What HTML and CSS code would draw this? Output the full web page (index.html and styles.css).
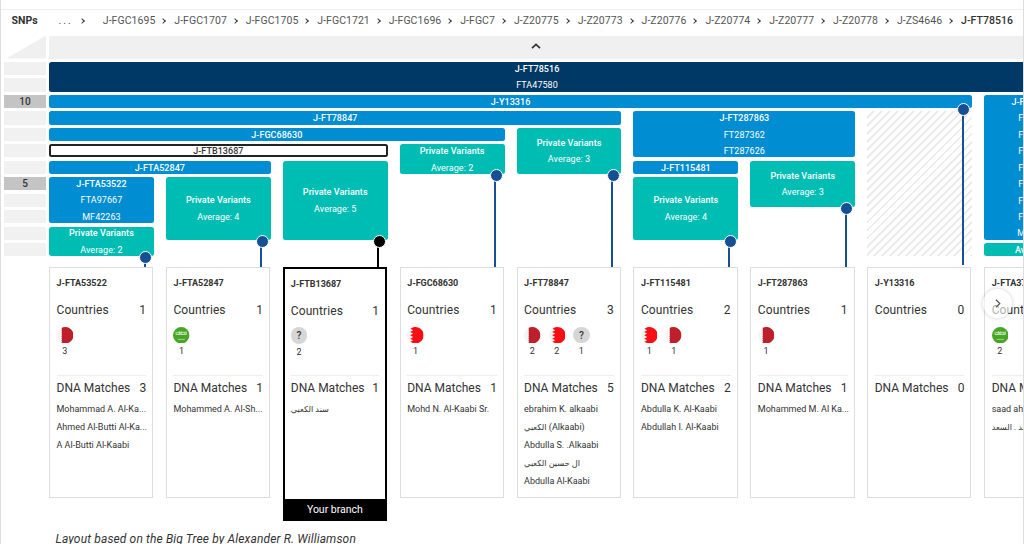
FILE: index.html
```html
<!DOCTYPE html>
<html lang="en">
<head>
  <meta charset="UTF-8" />
  <meta name="viewport" content="width=device-width, initial-scale=1" />
  <title>Block Tree</title>
  <link rel="stylesheet" href="styles.css">
</head>
<body>

  <!-- Flag symbols -->
  <svg class="symbols" width="0" height="0">
    <symbol id="qatar" viewBox="0 0 16 16">
      <circle cx="8" cy="8" r="8" fill="#f6f4f4" />
      <path d="M4.3 0.9A8 8 0 1 1 4.3 15.1L4.9 14l-.6-1 .6-1-.6-1 .6-1-.6-1 .6-1-.6-1 .6-1-.6-1 .6-1-.6-1 .6-1z" fill="#bf1f2a" />
    </symbol>
    <symbol id="bahrain" viewBox="0 0 16 16">
      <circle cx="8" cy="8" r="8" fill="#f3f3f3" />
      <path d="M6 .3A8 8 0 1 1 6 15.7L3.4 14.3 6 12.9 3.1 11.3 6 9.6 3.1 8 6 6.4 3.1 4.8 6 3.2 3.4 1.7z" fill="#fb0d14" />
    </symbol>
    <symbol id="saudi" viewBox="0 0 16 16">
      <circle cx="8" cy="8" r="8" fill="#48a526" />
      <path d="M3 7.4V4.5M4.2 7h2V4.6M6.2 4.2 7.4 7M8.5 7V4.3M9.6 7h2V4.6M12.9 7.4V4.4M3 7.2h10M4 5.2h8" fill="none" stroke="#c6e6ba" stroke-width=".9" />
      <path d="M4.6 12h7" stroke="#b4dea4" stroke-width=".8" />
    </symbol>
  </svg>

  <div class="page">
    <div class="crumbs">
      <span class="crumbs-title">SNPs</span>
      <span class="dots">...</span><i class="sep first"></i>
      <span>J-FGC1695</span><i class="sep"></i>
      <span>J-FGC1707</span><i class="sep"></i>
      <span>J-FGC1705</span><i class="sep"></i>
      <span>J-FGC1721</span><i class="sep"></i>
      <span>J-FGC1696</span><i class="sep"></i>
      <span>J-FGC7</span><i class="sep"></i>
      <span>J-Z20775</span><i class="sep"></i>
      <span>J-Z20773</span><i class="sep"></i>
      <span>J-Z20776</span><i class="sep"></i>
      <span>J-Z20774</span><i class="sep"></i>
      <span>J-Z20777</span><i class="sep"></i>
      <span>J-Z20778</span><i class="sep"></i>
      <span>J-ZS4646</span><i class="sep"></i>
      <span class="current">J-FT78516</span>
    </div>

    <div class="layout">
      <!-- SNP count scale -->
      <div class="scale">
        <div class="corner"></div>
        <div class="ticks">
          <div></div>
          <div></div>
          <div class="mark">10</div>
          <div></div>
          <div></div>
          <div></div>
          <div></div>
          <div class="mark">5</div>
          <div></div>
          <div></div>
          <div></div>
          <div></div>
        </div>
      </div>

      <div class="main">
        <div class="up">
          <svg width="10" height="6" viewBox="0 0 10 6"><path d="M1 5.2 5 1.4 9 5.2" fill="none" stroke="#333" stroke-width="1.7" /></svg>
        </div>

        <div class="tree">
          <div class="block root"><b>J-FT78516</b><span>FTA47580</span></div>
          <div class="block y13316"><b>J-Y13316</b></div>
          <div class="block ft78847"><b>J-FT78847</b></div>
          <div class="block fgc68630"><b>J-FGC68630</b></div>
          <div class="block own ftb13687"><b>J-FTB13687</b></div>
          <div class="block fta52847"><b>J-FTA52847</b></div>
          <div class="block fta53522"><b>J-FTA53522</b><span>FTA97667</span><span>MF42263</span></div>
          <div class="block ft287863"><b>J-FT287863</b><span>FT287362</span><span>FT287626</span></div>
          <div class="block ft115481"><b>J-FT115481</b></div>
          <div class="block fta37"><b>J-FTA37031</b><span>FTA3705</span><span>FTA3706</span><span>FTA3709</span><span>FTA3712</span><span>FTA3714</span><span>FTA3718</span><span>FTA3720</span><span>MF10578</span></div>
          <div class="hatch"></div>

          <div class="block private pv1"><b>Private Variants</b><span>Average: 2</span></div>
          <div class="block private pv2"><b>Private Variants</b><span>Average: 4</span></div>
          <div class="block private pv3"><b>Private Variants</b><span>Average: 5</span></div>
          <div class="block private pv4"><b>Private Variants</b><span>Average: 2</span></div>
          <div class="block private pv5"><b>Private Variants</b><span>Average: 3</span></div>
          <div class="block private pv6"><b>Private Variants</b><span>Average: 4</span></div>
          <div class="block private pv7"><b>Private Variants</b><span>Average: 3</span></div>
          <div class="block private pv9"><b>Average: 1</b></div>

          <div class="pin pin1"></div>
          <div class="pin pin2"></div>
          <div class="pin pin3"></div>
          <div class="pin pin4"></div>
          <div class="pin pin5"></div>
          <div class="pin pin6"></div>
          <div class="pin pin7"></div>
          <div class="pin pin8"></div>

          <div class="card">
            <h3>J-FTA53522</h3>
            <div class="row"><span>Countries</span><span>1</span></div>
            <div class="flags">
              <div class="flag"><svg><use href="#qatar" /></svg>3</div>
            </div>
            <div class="row matches"><span>DNA Matches</span><span>3</span></div>
            <p>Mohammad A. Al-Ka...</p>
            <p>Ahmed Al-Butti Al-Ka...</p>
            <p>A Al-Butti Al-Kaabi</p>
          </div>

          <div class="card">
            <h3>J-FTA52847</h3>
            <div class="row"><span>Countries</span><span>1</span></div>
            <div class="flags">
              <div class="flag"><svg><use href="#saudi" /></svg>1</div>
            </div>
            <div class="row matches"><span>DNA Matches</span><span>1</span></div>
            <p>Mohammed A. Al-Sh...</p>
          </div>

          <div class="card yours">
            <h3>J-FTB13687</h3>
            <div class="row"><span>Countries</span><span>1</span></div>
            <div class="flags">
              <div class="flag"><i class="unknown">?</i>2</div>
            </div>
            <div class="row matches"><span>DNA Matches</span><span>1</span></div>
            <p class="arabic">سند الكعبي</p>
            <div class="your-branch">Your branch</div>
          </div>

          <div class="card">
            <h3>J-FGC68630</h3>
            <div class="row"><span>Countries</span><span>1</span></div>
            <div class="flags">
              <div class="flag"><svg><use href="#bahrain" /></svg>1</div>
            </div>
            <div class="row matches"><span>DNA Matches</span><span>1</span></div>
            <p>Mohd N. Al-Kaabi Sr.</p>
          </div>

          <div class="card">
            <h3>J-FT78847</h3>
            <div class="row"><span>Countries</span><span>3</span></div>
            <div class="flags">
              <div class="flag"><svg><use href="#qatar" /></svg>2</div>
              <div class="flag"><svg><use href="#bahrain" /></svg>2</div>
              <div class="flag"><i class="unknown">?</i>1</div>
            </div>
            <div class="row matches"><span>DNA Matches</span><span>5</span></div>
            <p>ebrahim K. alkaabi</p>
            <p><span class="arabic">الكعبي</span> (Alkaabi)</p>
            <p>Abdulla S. .Alkaabi</p>
            <p class="arabic">ال حسين الكعبي</p>
            <p>Abdulla Al-Kaabi</p>
          </div>

          <div class="card">
            <h3>J-FT115481</h3>
            <div class="row"><span>Countries</span><span>2</span></div>
            <div class="flags">
              <div class="flag"><svg><use href="#bahrain" /></svg>1</div>
              <div class="flag"><svg><use href="#qatar" /></svg>1</div>
            </div>
            <div class="row matches"><span>DNA Matches</span><span>2</span></div>
            <p>Abdulla K. Al-Kaabi</p>
            <p>Abdullah I. Al-Kaabi</p>
          </div>

          <div class="card">
            <h3>J-FT287863</h3>
            <div class="row"><span>Countries</span><span>1</span></div>
            <div class="flags">
              <div class="flag"><svg><use href="#qatar" /></svg>1</div>
            </div>
            <div class="row matches"><span>DNA Matches</span><span>1</span></div>
            <p>Mohammed M. Al Ka...</p>
          </div>

          <div class="card">
            <h3>J-Y13316</h3>
            <div class="row"><span>Countries</span><span>0</span></div>
            <div class="flags"></div>
            <div class="row matches"><span>DNA Matches</span><span>0</span></div>
          </div>

          <div class="card">
            <h3>J-FTA37031</h3>
            <div class="row"><span>Countries</span><span>1</span></div>
            <div class="flags">
              <div class="flag"><svg><use href="#saudi" /></svg>2</div>
            </div>
            <div class="row matches"><span>DNA Matches</span><span>2</span></div>
            <p>saad ahmad</p>
            <p class="arabic">سعد . السعد</p>
          </div>
        </div>

        <p class="credit">Layout based on the Big Tree by Alexander R. Williamson</p>
      </div>
    </div>

    <button class="next" aria-label="Scroll right">
      <svg width="6" height="9" viewBox="0 0 6 9"><path d="M1 .8 4.8 4.5 1 8.2" fill="none" stroke="#555" stroke-width="1.2" /></svg>
    </button>
  </div>

</body>
</html>
```
FILE: styles.css
```css
* {
  margin: 0;
  padding: 0;
  box-sizing: border-box;
}

body {
  height: 544px;
  overflow: hidden;
  background: #fff;
  color: #333;
  font-family: Roboto, "DejaVu Sans", sans-serif;
}

.symbols {
  position: absolute;
}

.page {
  position: relative;
  height: 544px;
  padding-top: 9px;
  overflow: hidden;
  border-left: 1px solid #ddd;
  border-right: 1px solid #ddd;
}

/* Breadcrumbs */
.crumbs {
  display: flex;
  align-items: center;
  height: 26.5px;
  padding: 0 10px 4px 10.5px;
  border-top: 1px solid #eee;
  font-size: 10.5px;
  letter-spacing: 0.05px;
  white-space: nowrap;
  color: #555;
}

.crumbs-title {
  width: 48px;
  font-weight: 700;
  color: #333;
}

.dots {
  width: 22px;
  letter-spacing: 2px;
}

.sep {
  width: 4px;
  height: 4px;
  margin: 0 9px 0 6px;
  border-top: 1.2px solid #333;
  border-right: 1.2px solid #333;
  transform: rotate(45deg);
}

.sep.first {
  margin: 0 19px 0 0;
}

.current {
  font-weight: 500;
  color: #333;
}

.layout {
  display: flex;
  gap: 3px;
  padding-left: 3px;
}

/* Scale on the left */
.scale {
  flex: none;
  width: 42px;
}

.corner {
  height: 23px;
  background: #f0f0f0;
  clip-path: polygon(100% 0, 100% 100%, 6% 100%);
}

.ticks {
  display: grid;
  grid-template-rows: repeat(12, 13.2px);
  gap: 3.27px;
  margin-top: 3.5px;
}

.ticks div {
  background: #f1f1f1;
}

.ticks .mark {
  background: #c4c4c4;
  font-size: 10px;
  font-weight: 500;
  line-height: 13.5px;
  text-align: center;
}

.main {
  flex: none;
  width: 1041px;
}

.up {
  display: flex;
  align-items: center;
  justify-content: center;
  width: 975px;
  height: 23px;
  padding: 0 2px 3px 0;
  background: #f0f0f0;
}

/* One grid row per SNP, then a gap for the pins and the cards */
.tree {
  display: grid;
  grid-template-columns: repeat(9, 104.9px);
  grid-template-rows: repeat(12, 13.2px) 4.3px auto;
  gap: 3.27px 12px;
  height: 458px;
  align-content: start;
  margin-top: 3.5px;
}

.block {
  display: flex;
  flex-direction: column;
  align-items: center;
  justify-content: center;
  padding-top: 1px;
  border-radius: 2.5px;
  background: #008dd2;
  color: #fff;
  font-size: 9px;
  line-height: 16.47px;
  letter-spacing: 0.05px;
}

.block b {
  font-weight: 500;
  letter-spacing: 0.05px;
}

.private {
  background: #00bdb4;
}

.own {
  padding-top: 0;
  border: 2px solid #222;
  background: #fff;
  color: #333;
}

.root {
  grid-area: 1 / 1 / 3 / 10;
  width: 976px;
  border-radius: 2.5px 0 0 2.5px;
  background: #003866;
}

.y13316 { grid-area: 3 / 1 / 4 / 9; }
.ft78847 { grid-area: 4 / 1 / 5 / 6; }
.fgc68630 { grid-area: 5 / 1 / 6 / 5; }
.ftb13687 { grid-area: 6 / 1 / 7 / 4; }
.fta52847 { grid-area: 7 / 1 / 8 / 3; }
.fta53522 { grid-area: 8 / 1 / 11 / 2; }
.ft287863 { grid-area: 4 / 6 / 7 / 8; }
.ft115481 { grid-area: 7 / 6 / 8 / 7; }
.fta37 { grid-area: 3 / 9 / 12 / 10; }

.pv1 { grid-area: 11 / 1 / 13 / 2; }
.pv2 { grid-area: 8 / 2 / 12 / 3; }
.pv3 { grid-area: 7 / 3 / 12 / 4; }
.pv4 { grid-area: 6 / 4 / 8 / 5; }
.pv5 { grid-area: 5 / 5 / 8 / 6; }
.pv6 { grid-area: 8 / 6 / 12 / 7; }
.pv7 { grid-area: 7 / 7 / 10 / 8; }
.pv9 { grid-area: 12 / 9 / 13 / 10; }

.hatch {
  grid-area: 4 / 8 / 13 / 9;
  background: repeating-linear-gradient(135deg, #fff 0, #fff 3.7px, #ececec 3.7px, #ececec 5.7px);
}

/* Pins that join a block to its card */
.pin {
  position: relative;
  justify-self: end;
  z-index: 1;
  width: 2px;
  margin: 0 8.3px -3.2px 0;
  background: #164f93;
}

.pin::before {
  content: "";
  position: absolute;
  top: -8px;
  left: -4.5px;
  width: 11px;
  height: 11px;
  border: 1px solid #fff;
  border-radius: 50%;
  background: #164f93;
}

.pin1 { grid-area: 13 / 1; }
.pin2 { grid-area: 12 / 2 / 14 / 3; }
.pin3 { grid-area: 12 / 3 / 14 / 4; }
.pin4 { grid-area: 8 / 4 / 14 / 5; }
.pin5 { grid-area: 8 / 5 / 14 / 6; }
.pin6 { grid-area: 12 / 6 / 14 / 7; }
.pin7 { grid-area: 10 / 7 / 14 / 8; }
.pin8 { grid-area: 4 / 8 / 14 / 9; margin-bottom: -1px; }

.pin3,
.pin3::before {
  background: #000;
}

/* Cards */
.card {
  grid-row: 14;
  align-self: start;
  height: 231px;
  padding: 9px 6px 0 6.5px;
  border: 1px solid #ddd;
  margin-right: 0.7px;
}

.card h3 {
  height: 12px;
  font-size: 9px;
  font-weight: 700;
  line-height: 12px;
  letter-spacing: -0.03px;
}

.row {
  display: flex;
  justify-content: space-between;
  height: 16px;
  margin-top: 13px;
  font-size: 12px;
  line-height: 16px;
  letter-spacing: 0.1px;
  white-space: nowrap;
}

.flags {
  display: flex;
  gap: 8px;
  height: 41px;
  padding-top: 8.5px;
}

.flag {
  width: 16.5px;
  font-size: 9px;
  line-height: 16px;
  text-align: center;
}

.flag svg,
.unknown {
  display: block;
  width: 16.5px;
  height: 16.5px;
}

.unknown {
  border-radius: 50%;
  background: #d6d6d6;
  font-size: 10px;
  font-style: normal;
  font-weight: 500;
  line-height: 17px;
}

.matches {
  height: 25px;
  margin-top: 15.5px;
  padding-top: 4px;
  border-top: 1px solid #eee;
  letter-spacing: 0;
}

.card p {
  height: 18px;
  font-size: 9px;
  line-height: 18px;
  white-space: nowrap;
}

.card .arabic {
  font-size: 8.2px;
}

.yours {
  display: flex;
  flex-direction: column;
  height: 254px;
  border: 2px solid #000;
  border-bottom: 0;
  padding: 8.5px 6px 0;
}

.your-branch {
  margin: auto -6px 0;
  height: 22px;
  background: #000;
  color: #fff;
  font-size: 10.5px;
  line-height: 22px;
  text-align: center;
}

.credit {
  margin-top: 11px;
  padding-left: 6.5px;
  font-size: 12px;
  font-style: italic;
  line-height: 16px;
  letter-spacing: 0.14px;
}

/* Scroll button over the last card */
.next {
  position: absolute;
  top: 289px;
  right: 11px;
  display: flex;
  align-items: center;
  justify-content: center;
  width: 29px;
  height: 29px;
  border: 0;
  border-radius: 50%;
  background: rgba(255, 255, 255, 0.6);
  box-shadow: 0 0 4px rgba(0, 0, 0, 0.2);
}
```
